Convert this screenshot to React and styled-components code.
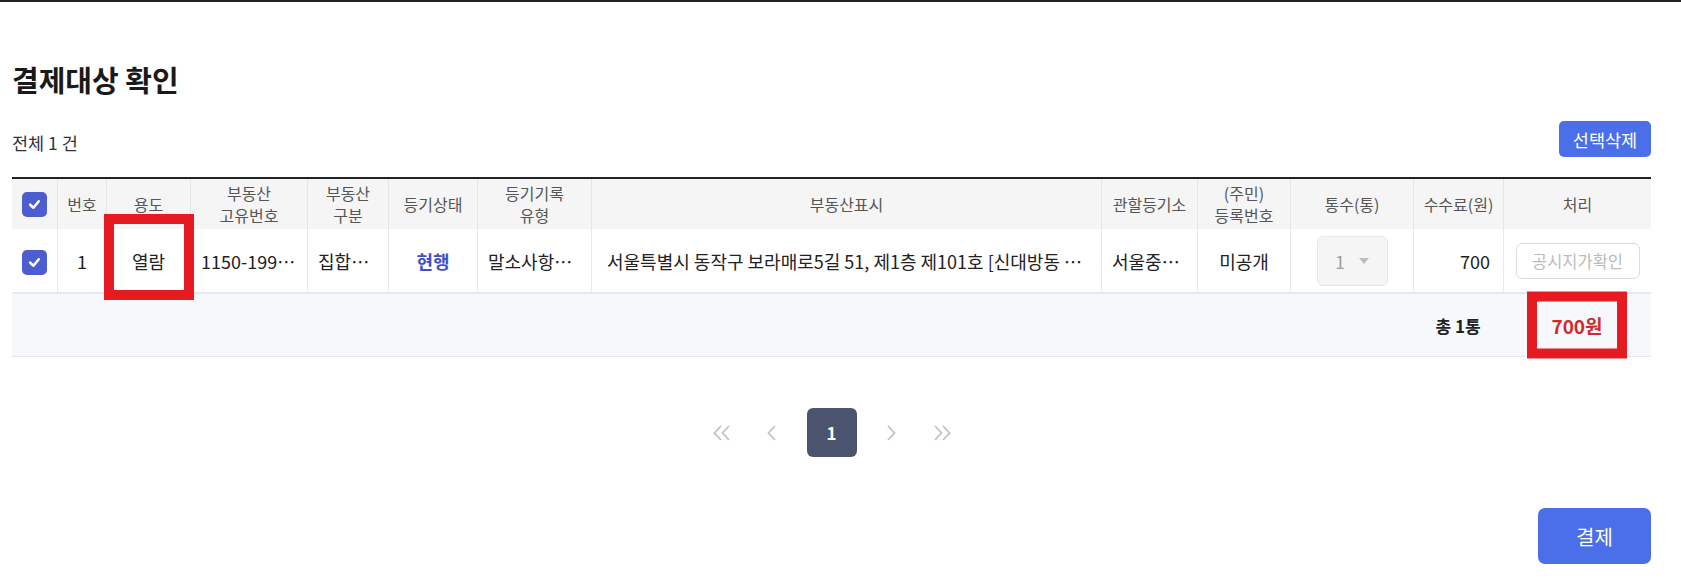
import React from 'react';
import styled, { createGlobalStyle } from 'styled-components';

const GlobalStyle = createGlobalStyle`
  html, body { margin: 0; padding: 0; background: #fff; }
  body {
    font-family: "Noto Sans CJK KR", "Noto Sans", sans-serif;
    color: #222;
  }
  * { box-sizing: border-box; }
`;

const Page = styled.div`
  border-top: 2px solid #222;
  padding: 57px 30px 18px 12px;
`;

const Title = styled.h2`
  margin: 0;
  font-size: 29px;
  font-weight: 700;
  line-height: 40px;
  color: #1a1a1a;
`;

const Toolbar = styled.div`
  margin-top: 22px;
  display: flex;
  justify-content: space-between;
  align-items: center;
`;

const Count = styled.span`
  margin-top: 8px;
  font-size: 17.5px;
  line-height: 24px;
  color: #333;
`;

const PrimaryButton = styled.button`
  border: 0;
  background: #4a6fe8;
  color: #fff;
  font-family: inherit;
  cursor: pointer;
  width: ${(p) => (p.$large ? '113px' : '92px')};
  height: ${(p) => (p.$large ? '56px' : '36px')};
  font-size: ${(p) => (p.$large ? '20px' : '17.5px')};
  border-radius: ${(p) => (p.$large ? '7px' : '5px')};
  padding: 0;
`;

const Table = styled.table`
  margin-top: 20px;
  width: 100%;
  table-layout: fixed;
  border-collapse: separate;
  border-spacing: 0;
  border-top: 2px solid #222;
`;

const Th = styled.th`
  height: 50px;
  padding: 0 4px;
  background: #f5f5f5;
  color: #555;
  font-size: 16px;
  font-weight: 400;
  line-height: 22px;
  text-align: center;
  border-left: 1px solid #e6e6e6;
  &:first-child { border-left: 0; }
`;

const Td = styled.td`
  position: relative;
  height: 65px;
  padding: ${(p) => (p.$wide ? '0 10px 0 15px' : p.$right ? '0 13px' : '0 10px')};
  border-bottom: 2px solid #e7e8ec;
  border-left: 1px solid #e8e8e8;
  font-size: 18px;
  color: ${(p) => (p.$status ? '#3f51c6' : '#222')};
  font-weight: ${(p) => (p.$status ? 700 : 400)};
  text-align: ${(p) => (p.$right ? 'right' : 'center')};
  white-space: nowrap;
  &:first-child { border-left: 0; }
`;

const Clip = styled.span`
  display: block;
  overflow: hidden;
  text-overflow: ellipsis;
  white-space: nowrap;
`;

const SumTd = styled.td`
  position: relative;
  height: 63px;
  background: #f7f8fc;
  border-bottom: 1px solid #e5e6ea;
  text-align: center;
  font-weight: 700;
  font-size: ${(p) => (p.$price ? '19px' : '17px')};
  color: ${(p) => (p.$price ? '#cf2a2f' : '#222')};
`;

const Check = styled.span`
  display: inline-flex;
  align-items: center;
  justify-content: center;
  width: 25px;
  height: 25px;
  border-radius: 5px;
  background: #4b5dcf;
  vertical-align: middle;
`;

const Highlight = styled.span`
  position: absolute;
  left: 50%;
  top: 50%;
  width: ${(p) => p.$w}px;
  height: ${(p) => p.$h}px;
  margin-top: ${(p) => p.$dy || 0}px;
  transform: translate(-50%, -50%);
  border: 10px solid #e61b22;
  pointer-events: none;
  z-index: 2;
`;

const Select = styled.div`
  display: inline-flex;
  align-items: center;
  justify-content: center;
  gap: 14px;
  width: 71px;
  height: 50px;
  border: 1px solid #e8e8e8;
  border-radius: 6px;
  background: #f5f5f5;
  color: #a0a0a0;
  font-size: 18px;
`;

const Caret = styled.span`
  width: 0;
  height: 0;
  border-left: 5px solid transparent;
  border-right: 5px solid transparent;
  border-top: 6px solid #bdbdbd;
`;

const GhostButton = styled.button`
  width: 124px;
  height: 36px;
  border: 1px solid #dcdcdc;
  border-radius: 6px;
  background: #fff;
  color: #bbb;
  font-family: inherit;
  font-size: 16.5px;
  padding: 0;
`;

const Pager = styled.nav`
  margin-top: 51px;
  display: flex;
  justify-content: center;
  align-items: center;
`;

const PageArrow = styled.button`
  width: 50px;
  height: 49px;
  border: 0;
  background: none;
  padding: 0;
  display: flex;
  align-items: center;
  justify-content: center;
`;

const PageNum = styled.button`
  width: 50px;
  height: 49px;
  margin: 0 10px;
  border: 0;
  border-radius: 6px;
  background: #4b536e;
  color: #fff;
  font-family: inherit;
  font-size: 17px;
  font-weight: 700;
  padding: 0;
`;

const Actions = styled.div`
  margin-top: 51px;
  display: flex;
  justify-content: flex-end;
`;

const CheckIcon = () => (
  <svg width="15" height="15" viewBox="0 0 14 14" fill="none">
    <path d="M3 7.2 L6 10 L11 4" stroke="#fff" strokeWidth="2.4" strokeLinecap="round" strokeLinejoin="round" />
  </svg>
);

const Chevron = ({ dir = 'left', double }) => {
  const flip = dir === 'right' ? 'scale(-1,1)' : undefined;
  const w = double ? 20 : 11;
  return (
    <svg width={w} height="16" viewBox={`0 0 ${w} 16`} fill="none">
      <g transform={flip} style={{ transformOrigin: 'center' }}>
        {double ? (
          <>
            <path d="M9 1 L2.5 8 L9 15" stroke="#c2c2c2" strokeWidth="1.8" />
            <path d="M17 1 L10.5 8 L17 15" stroke="#c2c2c2" strokeWidth="1.8" />
          </>
        ) : (
          <path d="M9 1 L2.5 8 L9 15" stroke="#c2c2c2" strokeWidth="1.8" />
        )}
      </g>
    </svg>
  );
};

const widths = [45, 49, 84, 117, 81, 89, 114, null, 96, 93, 123, 90, 148];

export default function App() {
  return (
    <>
      <GlobalStyle />
      <Page>
        <Title>결제대상 확인</Title>
        <Toolbar>
          <Count>전체 1 건</Count>
          <PrimaryButton>선택삭제</PrimaryButton>
        </Toolbar>
        <Table>
          <colgroup>
            {widths.map((w, i) => (
              <col key={i} style={w ? { width: w } : undefined} />
            ))}
          </colgroup>
          <thead>
            <tr>
              <Th><Check><CheckIcon /></Check></Th>
              <Th>번호</Th>
              <Th>용도</Th>
              <Th>부동산<br />고유번호</Th>
              <Th>부동산<br />구분</Th>
              <Th>등기상태</Th>
              <Th>등기기록<br />유형</Th>
              <Th>부동산표시</Th>
              <Th>관할등기소</Th>
              <Th>(주민)<br />등록번호</Th>
              <Th>통수(통)</Th>
              <Th>수수료(원)</Th>
              <Th>처리</Th>
            </tr>
          </thead>
          <tbody>
            <tr>
              <Td><Check><CheckIcon /></Check></Td>
              <Td>1</Td>
              <Td>
                열람
                <Highlight $w={90} $h={86} $dy={-4} />
              </Td>
              <Td><Clip>1150-1996-123456</Clip></Td>
              <Td><Clip>집합건물</Clip></Td>
              <Td $status>현행</Td>
              <Td><Clip>말소사항포함</Clip></Td>
              <Td $wide><Clip>서울특별시 동작구 보라매로5길 51, 제1층 제101호 [신대방동 395-68]</Clip></Td>
              <Td><Clip>서울중앙지방법원 동작등기소</Clip></Td>
              <Td>미공개</Td>
              <Td>
                <Select>1<Caret /></Select>
              </Td>
              <Td $right>700</Td>
              <Td><GhostButton>공시지가확인</GhostButton></Td>
            </tr>
          </tbody>
          <tfoot>
            <tr>
              <SumTd colSpan={11} />
              <SumTd>총 1통</SumTd>
              <SumTd $price>
                700원
                <Highlight $w={100} $h={67} />
              </SumTd>
            </tr>
          </tfoot>
        </Table>
        <Pager>
          <PageArrow><Chevron double /></PageArrow>
          <PageArrow><Chevron /></PageArrow>
          <PageNum>1</PageNum>
          <PageArrow><Chevron dir="right" /></PageArrow>
          <PageArrow><Chevron dir="right" double /></PageArrow>
        </Pager>
        <Actions>
          <PrimaryButton $large>결제</PrimaryButton>
        </Actions>
      </Page>
    </>
  );
}
